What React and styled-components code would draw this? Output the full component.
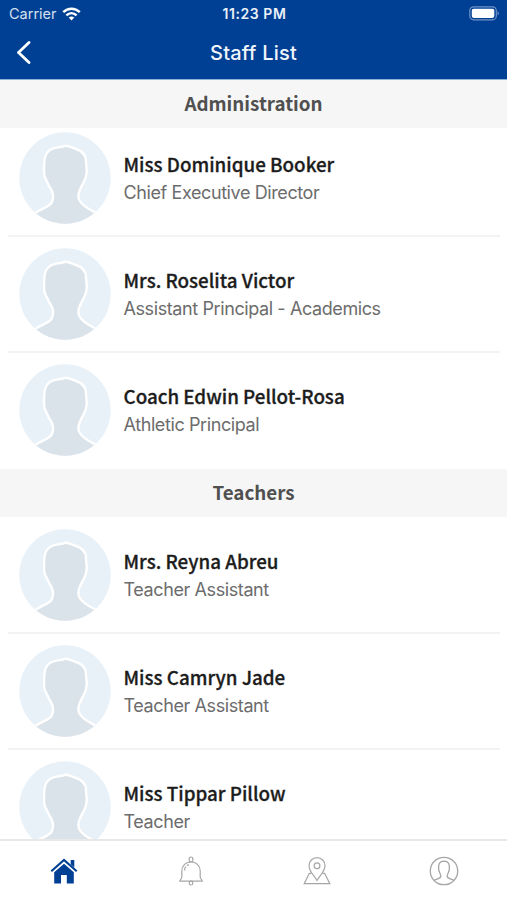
import styled, { createGlobalStyle } from 'styled-components';

const administration = [
    { name: 'Miss Dominique Booker', role: 'Chief Executive Director' },
    { name: 'Mrs. Roselita Victor', role: 'Assistant Principal - Academics' },
    { name: 'Coach Edwin Pellot-Rosa', role: 'Athletic Principal' },
];

const teachers = [
    { name: 'Mrs. Reyna Abreu', role: 'Teacher Assistant' },
    { name: 'Miss Camryn Jade', role: 'Teacher Assistant' },
    { name: 'Miss Tippar Pillow', role: 'Teacher' },
];

export default function App() {
    return (
        <Screen>
            <GlobalStyle />
            <TopBar>
                <StatusBar>
                    <Carrier>Carrier <WifiIcon /></Carrier>
                    <Clock>11:23 PM</Clock>
                    <Battery><BatteryIcon /></Battery>
                </StatusBar>
                <NavBar>
                    <BackButton aria-label="Back"><BackIcon /></BackButton>
                    <PageTitle>Staff List</PageTitle>
                </NavBar>
            </TopBar>
            <Content>
                <StaffSection title="Administration" people={administration} $offset={-7} />
                <StaffSection title="Teachers" people={teachers} $offset={1} />
            </Content>
            <TabBar>
                <Tab $active aria-label="Home"><HomeIcon /></Tab>
                <Tab aria-label="Alerts"><BellIcon /></Tab>
                <Tab aria-label="Map"><MapIcon /></Tab>
                <Tab aria-label="Profile"><ProfileIcon /></Tab>
            </TabBar>
        </Screen>
    )
};

function StaffSection({ title, people, $offset }) {
    return (
        <Section>
            <SectionTitle>{title}</SectionTitle>
            <StaffList $offset={$offset}>
                {people.map(person => (
                    <StaffRow key={person.name}>
                        <Avatar />
                        <StaffInfo>
                            <StaffName>{person.name}</StaffName>
                            <StaffRole>{person.role}</StaffRole>
                        </StaffInfo>
                    </StaffRow>
                ))}
            </StaffList>
        </Section>
    )
}

function Avatar() {
    return (
        <AvatarImage viewBox="0 0 92 92">
            <clipPath id="avatar"><circle cx="46" cy="46" r="45.7" /></clipPath>
            <g clipPath="url(#avatar)">
                <rect width="92" height="92" fill="#e8f1f8" />
                <path
                    d="M10 84 L17 80.5 C23 76 33 74 33.3 69 C35 64 33 58 30 54 C28 48 25.5 47 25.2 42 C25 38 25 34 25.5 28 C26 23 28 20 31 18 C35 15 40 16 46 13.8 C50 13.5 53 16 57 17 C63 19 67 22 67 29 C67 34 68.5 38 67.3 42 C67 48 63 52 60.8 58 C59 61 59 66 60.5 68.5 C64 75 71 77 76 80.5 L82 84 L82 96 L10 96 Z"
                    fill="#dae2ea" stroke="#fff" strokeWidth="2.4"
                />
            </g>
        </AvatarImage>
    )
}

function WifiIcon() {
    return (
        <svg width="19" height="14" viewBox="0 0 19 14" fill="none" stroke="#fff" strokeWidth="2.5">
            <path d="M1.2 5.2 C6 .6 13 .6 17.8 5.2" />
            <path d="M4.4 8.3 C7.5 5.4 11.5 5.4 14.6 8.3" />
            <path d="M6.7 10.6 Q9.5 8.3 12.3 10.6 L9.5 13.5 Z" fill="#fff" stroke="none" />
        </svg>
    )
}

function BatteryIcon() {
    return (
        <svg width="31" height="15" viewBox="0 0 31 15">
            <rect x=".8" y=".8" width="26.5" height="13" rx="3.8" fill="none" stroke="#6f93c4" strokeWidth="1.2" />
            <rect x="2.8" y="2.7" width="22.5" height="9.2" rx="1.8" fill="#fff" />
            <path d="M28.6 5 Q31 7.3 28.6 9.6 Z" fill="#7f9fca" />
        </svg>
    )
}

function BackIcon() {
    return (
        <svg width="16" height="24" viewBox="0 0 16 24" fill="none" stroke="#fff" strokeWidth="2.8" strokeLinecap="round" strokeLinejoin="round">
            <path d="M13 1.5 L2.5 11.5 L13 21.5" />
        </svg>
    )
}

function HomeIcon() {
    return (
        <svg width="28" height="26" viewBox="0 0 28 26">
            <path d="M1.3 13.2 L14 1.9 L26.7 13.2" fill="none" stroke="currentColor" strokeWidth="2.1" />
            <path d="M20.7 2 H24.3 V9.5 L20.7 6.2 Z" fill="currentColor" />
            <path d="M4.2 14.3 L14 5.7 L23.8 14.3 V25.5 H16.8 V17 H11 V25.5 H4.2 Z" fill="currentColor" />
        </svg>
    )
}

function BellIcon() {
    return (
        <svg width="26" height="30" viewBox="0 0 26 30" fill="none" stroke="currentColor" strokeWidth="1.2">
            <rect x="11.2" y="1" width="3.6" height="5" rx="1.8" />
            <path d="M3.8 21 V15 C3.8 9.5 8 5.8 13 5.8 C18 5.8 22.2 9.5 22.2 15 V21 C22.2 23 24.3 23.5 24.3 25.2 H1.7 C1.7 23.5 3.8 23 3.8 21 Z" />
            <path d="M6.6 14.5 C6.6 11.5 8.2 9.5 10.8 8.6" strokeDasharray="4 1.5" />
            <rect x="11.2" y="25.2" width="3.6" height="3.8" rx="1.8" />
        </svg>
    )
}

function MapIcon() {
    return (
        <svg width="28" height="29" viewBox="0 0 28 29" fill="none" stroke="currentColor" strokeWidth="1.2">
            <path d="M14 24.5 C11.5 20 6 15.5 6 9.7 A8 8 0 0 1 22 9.7 C22 15.5 16.5 20 14 24.5 Z" />
            <circle cx="14" cy="9.7" r="2.9" />
            <path d="M8.5 17.3 H6.3 L1.2 27.7 H26.8 L21.7 17.3 H19.5" />
        </svg>
    )
}

function ProfileIcon() {
    return (
        <svg width="30" height="30" viewBox="0 0 30 30" fill="none" stroke="currentColor" strokeWidth="1.3">
            <circle cx="15" cy="15" r="13.7" />
            <path d="M5 24.5 C7 22.8 12 23 11.8 20 C11.8 17.5 9.5 16.5 9.6 12 C9.4 8 10.5 5.3 15 5.2 C19.5 5.3 20.6 8 20.4 12 C20.5 16.5 18.2 17.5 18.2 20 C18 23 23 22.8 25 24.5" />
        </svg>
    )
}

const GlobalStyle = createGlobalStyle`
    * {
        box-sizing: border-box;
    }
    body {
        margin: 0;
        font-family: Inter, sans-serif;
        background-color: #fff;
    }
    h1, h2, p, ul {
        margin: 0;
        padding: 0;
    }
    svg {
        display: block;
        flex-shrink: 0;
    }
`

const Screen = styled.div`
    display: flex;
    flex-direction: column;
    height: 900px;
    overflow: hidden;
    background-color: #fff;
`

const TopBar = styled.header`
    flex-shrink: 0;
    height: 80px;
    background-color: #004094;
    border-bottom: 1px solid #8eb0d8;
    color: #fff;
`

const StatusBar = styled.div`
    display: grid;
    grid-template-columns: 1fr auto 1fr;
    align-items: center;
    height: 27px;
    padding: 0 7px 0 9px;
    font-size: 14px;
`

const Carrier = styled.span`
    display: flex;
    align-items: center;
    gap: 5px;
    font-size: 14.5px;
    color: #d5e1f0;
`

const Clock = styled.span`
    font-weight: 600;
    letter-spacing: 0.55px;
    color: #e9f0f8;
`

const Battery = styled.span`
    justify-self: end;
`

const NavBar = styled.div`
    display: grid;
    grid-template-columns: 60px 1fr 60px;
    align-items: center;
    height: 51px;
`

const BackButton = styled.button`
    padding: 0 0 0 16px;
    border: none;
    background: none;
`

const PageTitle = styled.h1`
    text-align: center;
    font-size: 20px;
    font-weight: 500;
    line-height: 24px;
    letter-spacing: 0.2px;
    color: #f0f5fb;
`

const Content = styled.main`
    flex: 1;
    min-height: 0;
    overflow: hidden;
`

const Section = styled.section`
    display: flex;
    flex-direction: column;
`

const SectionTitle = styled.h2`
    height: 48px;
    background-color: #f6f6f6;
    text-align: center;
    font-family: 'Noto Sans CJK SC', sans-serif;
    font-size: 18.8px;
    font-weight: 700;
    line-height: 46px;
    color: #505050;
`

const StaffList = styled.ul`
    margin-top: ${props => props.$offset}px;
    list-style: none;
`

const StaffRow = styled.li`
    display: flex;
    align-items: center;
    gap: 12.5px;
    height: 116px;
    margin: 0 7px 0 8px;
    padding-left: 11px;
    border-bottom: 2px solid #f3f3f3;

    &:last-child {
        border-bottom-color: transparent;
    }
`

const AvatarImage = styled.svg`
    width: 92px;
    height: 92px;
`

const StaffInfo = styled.div`
    display: flex;
    flex-direction: column;
    gap: 2px;
`

const StaffName = styled.p`
    font-family: 'Noto Sans CJK SC', sans-serif;
    font-size: 18.8px;
    font-weight: 500;
    line-height: 26px;
    color: #1c1c1c;
    -webkit-text-stroke: 0.3px #1c1c1c;
`

const StaffRole = styled.p`
    font-size: 18px;
    line-height: 27px;
    letter-spacing: -0.4px;
    color: #6c6c6c;
`

const TabBar = styled.nav`
    display: grid;
    grid-template-columns: repeat(4, 1fr);
    flex-shrink: 0;
    height: 61px;
    padding-left: 1px;
    border-top: 2px solid #e8e8e8;
    background-color: #fff;
`

const Tab = styled.button`
    display: flex;
    align-items: center;
    justify-content: center;
    padding: 0;
    border: none;
    background: none;
    color: ${props => props.$active ? '#004094' : '#a6a6a6'};
`
